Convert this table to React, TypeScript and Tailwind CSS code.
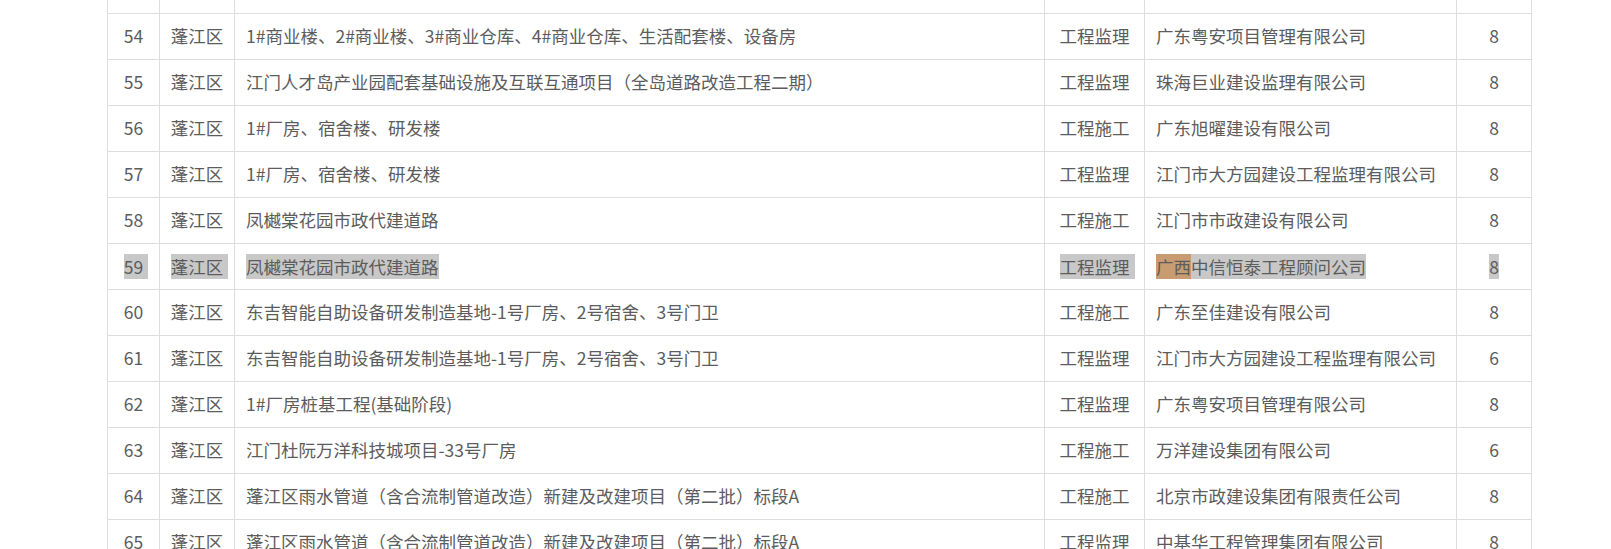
import React from "react";

type Row = { no: string; area: string; name: string; type: string; company: string; score: string };

const rows: Row[] = [
  { no: "54", area: "蓬江区", name: "1#商业楼、2#商业楼、3#商业仓库、4#商业仓库、生活配套楼、设备房", type: "工程监理", company: "广东粤安项目管理有限公司", score: "8" },
  { no: "55", area: "蓬江区", name: "江门人才岛产业园配套基础设施及互联互通项目（全岛道路改造工程二期）", type: "工程监理", company: "珠海巨业建设监理有限公司", score: "8" },
  { no: "56", area: "蓬江区", name: "1#厂房、宿舍楼、研发楼", type: "工程施工", company: "广东旭曜建设有限公司", score: "8" },
  { no: "57", area: "蓬江区", name: "1#厂房、宿舍楼、研发楼", type: "工程监理", company: "江门市大方园建设工程监理有限公司", score: "8" },
  { no: "58", area: "蓬江区", name: "凤樾棠花园市政代建道路", type: "工程施工", company: "江门市市政建设有限公司", score: "8" },
  { no: "59", area: "蓬江区", name: "凤樾棠花园市政代建道路", type: "工程监理", company: "广西中信恒泰工程顾问公司", score: "8" },
  { no: "60", area: "蓬江区", name: "东吉智能自助设备研发制造基地-1号厂房、2号宿舍、3号门卫", type: "工程施工", company: "广东至佳建设有限公司", score: "8" },
  { no: "61", area: "蓬江区", name: "东吉智能自助设备研发制造基地-1号厂房、2号宿舍、3号门卫", type: "工程监理", company: "江门市大方园建设工程监理有限公司", score: "6" },
  { no: "62", area: "蓬江区", name: "1#厂房桩基工程(基础阶段)", type: "工程监理", company: "广东粤安项目管理有限公司", score: "8" },
  { no: "63", area: "蓬江区", name: "江门杜阮万洋科技城项目-33号厂房", type: "工程施工", company: "万洋建设集团有限公司", score: "6" },
  { no: "64", area: "蓬江区", name: "蓬江区雨水管道（含合流制管道改造）新建及改建项目（第二批）标段A", type: "工程施工", company: "北京市政建设集团有限责任公司", score: "8" },
  { no: "65", area: "蓬江区", name: "蓬江区雨水管道（含合流制管道改造）新建及改建项目（第二批）标段A", type: "工程监理", company: "中基华工程管理集团有限公司", score: "8" },
];

const cell = "border-r border-b border-[#dddddd] flex items-center";

function Hl({ children, space = true }: { children: React.ReactNode; space?: boolean }) {
  return (
    <span
      className={
        "inline-block bg-[#c8c8c8] leading-[25px] " + (space ? "pr-[5px] mr-[-5px]" : "")
      }
    >
      {children}
    </span>
  );
}

export default function App() {
  return (
    <div
      className="h-[549px] w-full overflow-hidden bg-white text-[17.5px] text-[#5c5c5c]"
      style={{ fontFamily: '"Noto Sans CJK SC", "Noto Sans", sans-serif' }}
    >
      <div className="ml-[107px] w-[1425px] border-l border-[#dddddd] grid grid-cols-[52px_75px_810px_100px_312px_75px]">
        {/* partially visible row above */}
        <div className={cell + " h-[14px]"} />
        <div className={cell + " h-[14px]"} />
        <div className={cell + " h-[14px]"} />
        <div className={cell + " h-[14px]"} />
        <div className={cell + " h-[14px]"} />
        <div className={cell + " h-[14px]"} />
        {rows.map((r) => {
          const hl = r.no === "59";
          return (
            <React.Fragment key={r.no}>
              <div className={cell + " h-[46px] justify-center"}>{hl ? <Hl>{r.no}</Hl> : r.no}</div>
              <div className={cell + " h-[46px] justify-center"}>{hl ? <Hl>{r.area}</Hl> : r.area}</div>
              <div className={cell + " h-[46px] pl-[11px] whitespace-nowrap"}>
                {hl ? <Hl space={false}>{r.name}</Hl> : r.name}
              </div>
              <div className={cell + " h-[46px] justify-center whitespace-nowrap"}>
                {hl ? <Hl>{r.type}</Hl> : r.type}
              </div>
              <div className={cell + " h-[46px] pl-[11px] whitespace-nowrap"}>
                {hl ? (
                  <span className="inline-block bg-[#c8c8c8] leading-[25px]">
                    <span className="bg-[#c99b70]">广西</span>
                    中信恒泰工程顾问公司
                  </span>
                ) : (
                  r.company
                )}
              </div>
              <div className={cell + " h-[46px] justify-center"}>
                {hl ? <span className="inline-block bg-[#c8c8c8] leading-[25px]">{r.score}</span> : r.score}
              </div>
            </React.Fragment>
          );
        })}
      </div>
    </div>
  );
}
